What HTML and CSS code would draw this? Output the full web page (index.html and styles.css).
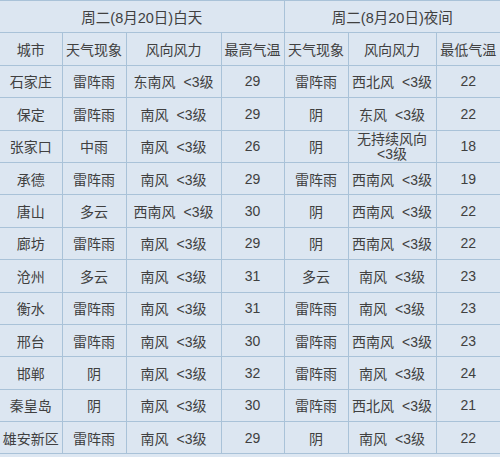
FILE: index.html
```html
<!DOCTYPE html>
<html lang="zh">
<head>
<meta charset="utf-8">
<link rel="stylesheet" href="styles.css">
</head>
<body>
<table class="wx">
<colgroup>
<col class="c1"><col class="c2"><col class="c3"><col class="c4"><col class="c5"><col class="c6"><col class="c7">
</colgroup>
<tr class="title"><td colspan="4">周二(8月20日)白天</td><td colspan="3">周二(8月20日)夜间</td></tr>
<tr><td>城市</td><td>天气现象</td><td>风向风力</td><td>最高气温</td><td>天气现象</td><td>风向风力</td><td>最低气温</td></tr>
<tr><td>石家庄</td><td>雷阵雨</td><td>东南风 &lt;3级</td><td>29</td><td>雷阵雨</td><td>西北风 &lt;3级</td><td>22</td></tr>
<tr><td>保定</td><td>雷阵雨</td><td>南风 &lt;3级</td><td>29</td><td>阴</td><td>东风 &lt;3级</td><td>22</td></tr>
<tr><td>张家口</td><td>中雨</td><td>南风 &lt;3级</td><td>26</td><td>阴</td><td><div class="wrap">无持续风向 &lt;3级</div></td><td>18</td></tr>
<tr><td>承德</td><td>雷阵雨</td><td>南风 &lt;3级</td><td>29</td><td>雷阵雨</td><td>西南风 &lt;3级</td><td>19</td></tr>
<tr><td>唐山</td><td>多云</td><td>西南风 &lt;3级</td><td>30</td><td>阴</td><td>西南风 &lt;3级</td><td>22</td></tr>
<tr><td>廊坊</td><td>雷阵雨</td><td>南风 &lt;3级</td><td>29</td><td>阴</td><td>西南风 &lt;3级</td><td>22</td></tr>
<tr><td>沧州</td><td>多云</td><td>南风 &lt;3级</td><td>31</td><td>多云</td><td>南风 &lt;3级</td><td>23</td></tr>
<tr><td>衡水</td><td>雷阵雨</td><td>南风 &lt;3级</td><td>31</td><td>雷阵雨</td><td>南风 &lt;3级</td><td>23</td></tr>
<tr><td>邢台</td><td>雷阵雨</td><td>南风 &lt;3级</td><td>30</td><td>雷阵雨</td><td>西南风 &lt;3级</td><td>23</td></tr>
<tr><td>邯郸</td><td>阴</td><td>南风 &lt;3级</td><td>32</td><td>雷阵雨</td><td>南风 &lt;3级</td><td>24</td></tr>
<tr><td>秦皇岛</td><td>阴</td><td>南风 &lt;3级</td><td>30</td><td>雷阵雨</td><td>西北风 &lt;3级</td><td>21</td></tr>
<tr><td>雄安新区</td><td>雷阵雨</td><td>南风 &lt;3级</td><td>29</td><td>阴</td><td>南风 &lt;3级</td><td>22</td></tr>
</table>
</body>
</html>
```
FILE: styles.css
```css
html, body {
  margin: 0;
  padding: 0;
  background: #dde7f2;
}
.wx {
  width: 500px;
  table-layout: fixed;
  border-collapse: collapse;
  font-family: "Liberation Sans", "Noto Sans CJK SC", sans-serif;
  font-size: 14px;
  color: #404040;
  background: #dce6f1;
}
.c1 { width: 62px; }
.c2 { width: 64px; }
.c3 { width: 95px; }
.c4 { width: 63px; }
.c5 { width: 64px; }
.c6 { width: 88px; }
.c7 { width: 64px; }
.wx td {
  height: 31.4px;
  padding: 0;
  text-align: center;
  vertical-align: middle;
  border: 1px solid #a9c2d8;
  white-space: nowrap;
  overflow: hidden;
  word-spacing: 4px;
}
.wx tr td:first-child { border-left: none; }
.wx tr td:last-child { border-right: none; }
.title td {
  font-size: 14.5px;
  word-spacing: 0;
}
.wx td .wrap {
  white-space: normal;
  word-spacing: 0;
  height: 31px;
  overflow: hidden;
  line-height: 15px;
  padding: 1px 4px 0;
  box-sizing: border-box;
  word-break: break-all;
}
```
